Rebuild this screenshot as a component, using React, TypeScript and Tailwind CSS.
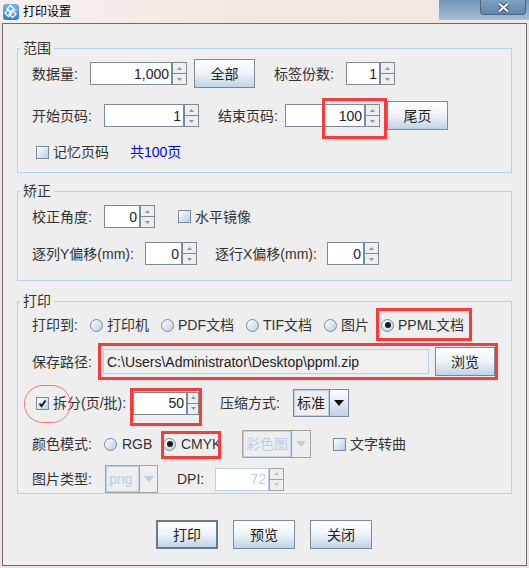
import React from "react"

type Kids = { children?: React.ReactNode }

function Tri({ up, color = "#8796a5" }: { up?: boolean; color?: string }) {
  return (
    <svg width="5" height="3" viewBox="0 0 5 3">
      <polygon points={up ? "2.5,0 5,3 0,3" : "0,0 5,0 2.5,3"} fill={color} />
    </svg>
  )
}

function Spinner({
  field,
  btn = "w-[15px]",
  value,
  disabled,
}: {
  field: string
  btn?: string
  value: string
  disabled?: boolean
}) {
  const bc = disabled ? "border-[#a3a3a3]" : "border-[#7a8a99]"
  return (
    <div className="flex h-[23px]">
      <div
        className={`${field} h-full bg-white border flex items-center justify-end pr-[2px] ${
          disabled ? "border-[#b8cfe5] text-[#b8cfe5]" : "border-[#7a8a99] text-[#222]"
        }`}
      >
        {value}
      </div>
      <div className={`${btn} h-full flex flex-col`}>
        <div className={`flex-1 border ${bc} bg-[#eeeeee] flex items-center justify-center`}>
          <Tri up color={disabled ? "#b8c4cf" : "#8796a5"} />
        </div>
        <div className={`flex-1 border border-t-0 ${bc} bg-[#eeeeee] flex items-center justify-center`}>
          <Tri color={disabled ? "#b8c4cf" : "#8796a5"} />
        </div>
      </div>
    </div>
  )
}

function Btn({ w, strong, children }: { w: string; strong?: boolean } & Kids) {
  return (
    <div
      className={`${w} h-[29px] flex items-center justify-center text-[#222] bg-linear-to-b from-white via-[#eef3f8] to-[#bfd2e6] ${
        strong ? "border-2 border-[#657b92]" : "border border-[#7a8a99]"
      }`}
    >
      {children}
    </div>
  )
}

function Check({ on }: { on?: boolean }) {
  return (
    <span className="w-[13px] h-[13px] shrink-0 border border-[#7a8a99] bg-linear-to-br from-white to-[#b8cfe5] flex items-center justify-center">
      {on && (
        <svg width="9" height="9" viewBox="0 0 9 9">
          <path d="M1.5 4.5 L3.5 7 L7.5 1.5" stroke="#1a1a1a" strokeWidth="2" fill="none" />
        </svg>
      )}
    </span>
  )
}

function Radio({ on }: { on?: boolean }) {
  return (
    <span className="w-[13px] h-[13px] shrink-0 rounded-full border border-[#7a8a99] bg-linear-to-br from-white to-[#b8cfe5] flex items-center justify-center">
      {on && <span className="w-[6px] h-[6px] rounded-full bg-[#1a1a1a]" />}
    </span>
  )
}

function Combo({
  field,
  arrow,
  text,
  disabled,
}: {
  field: string
  arrow: string
  text: string
  disabled?: boolean
}) {
  return (
    <div className={`flex h-[28px] border ${disabled ? "border-[#a3a3a3]" : "border-[#7a8a99]"}`}>
      <div
        className={`${field} h-full border border-[#b8cfe5] bg-[#eeeeee] flex items-center pl-[2px] ${
          disabled ? "text-[#b8cfe5]" : "text-[#222]"
        }`}
      >
        {text}
      </div>
      <div
        className={`${arrow} h-full flex items-center justify-center border-l ${
          disabled
            ? "border-[#a3a3a3] bg-[#eeeeee]"
            : "border-[#7a8a99] bg-linear-to-b from-white to-[#bfd2e6]"
        }`}
      >
        <svg width="10" height="6" viewBox="0 0 10 6">
          <polygon points="0,0 10,0 5,6" fill={disabled ? "#b8cfe5" : "#111"} />
        </svg>
      </div>
    </div>
  )
}

function Group({ title, className, children }: { title: string; className: string } & Kids) {
  return (
    <fieldset className={`ml-[14px] w-[495px] border border-[#b8cfe5] ${className}`}>
      <legend className="ml-[2px] px-[3px] leading-[16px] text-[#333]">{title}</legend>
      {children}
    </fieldset>
  )
}

function AppIcon() {
  return (
    <svg width="16" height="16" viewBox="0 0 16 16">
      <defs>
        <linearGradient id="ig" x1="0" y1="0" x2="0" y2="1">
          <stop offset="0" stopColor="#6fb6f2" />
          <stop offset="1" stopColor="#2e7fd6" />
        </linearGradient>
      </defs>
      <rect x="0" y="0" width="16" height="16" rx="3" fill="url(#ig)" />
      <g fill="none" stroke="#fff" strokeWidth="1.3">
        <rect x="5" y="2.5" width="5" height="5" transform="rotate(45 7.5 5)" />
        <rect x="3" y="6.5" width="5" height="5" transform="rotate(45 5.5 9)" />
        <rect x="7" y="7.5" width="5" height="5" transform="rotate(45 9.5 10)" />
      </g>
      <circle cx="12.5" cy="6" r="1.3" fill="#f4c542" />
    </svg>
  )
}

export default function App() {
  return (
    <div className="relative w-[529px] h-[568px] overflow-hidden bg-[#f2e2e1] font-['Liberation_Sans','Noto_Sans_CJK_SC',sans-serif] text-[14px] leading-[16px] text-[#333]">
      {/* title bar */}
      <div className="h-[23px] flex bg-linear-to-r from-[#f6f0ee] via-[#f1e8e1] to-[#efe9e4]">
        <div className="flex items-center pl-[3px] gap-[4px]">
          <AppIcon />
          <span className="text-[12px] text-black">打印设置</span>
        </div>
        <div className="flex-1" />
        <div className="w-[90px] h-[20px] bg-linear-to-b from-[#6f96b8] to-[#a9c0d3] flex justify-end pr-[3px]">
          <div className="w-[46px] h-[15px] rounded-b-[4px] border border-t-0 border-[#4a6682] bg-linear-to-b from-[#7fa2c2] to-[#5f86aa] flex items-center justify-center">
            <svg width="13" height="11" viewBox="0 0 13 11">
              <path d="M2 1.5 L11 9.5 M11 1.5 L2 9.5" stroke="#34495e" strokeWidth="4" />
              <path d="M2 1.5 L11 9.5 M11 1.5 L2 9.5" stroke="#fff" strokeWidth="2.2" />
            </svg>
          </div>
        </div>
      </div>

      {/* window */}
      <div className="ml-[2px] w-[525px] h-[543px] border border-[#6e6e6e] bg-[#eeeeee] flex flex-col">
        <Group title="范围" className="mt-[16px] pb-[10px]">
          <div className="mt-[3px] h-[29px] flex items-center pl-[14px]">
            <span className="w-[58px]">数据量:</span>
            <Spinner field="w-[82px]" value="1,000" />
            <div className="ml-[7px]">
              <Btn w="w-[61px]">全部</Btn>
            </div>
            <span className="ml-[19px] w-[72px]">标签份数:</span>
            <Spinner field="w-[34px]" value="1" />
          </div>
          <div className="mt-[13px] h-[29px] flex items-center pl-[14px]">
            <span className="w-[72px]">开始页码:</span>
            <Spinner field="w-[80px]" value="1" />
            <span className="ml-[19px] w-[67px]">结束页码:</span>
            <Spinner field="w-[80px]" value="100" />
            <div className="ml-[7px]">
              <Btn w="w-[61px]">尾页</Btn>
            </div>
          </div>
          <div className="mt-[12px] h-[20px] flex items-center pl-[18px]">
            <Check />
            <span className="ml-[4px] w-[77px]">记忆页码</span>
            <span className="text-[#0000ff]">共100页</span>
          </div>
        </Group>

        <Group title="矫正" className="mt-[10px] pb-[15px]">
          <div className="mt-[6px] h-[23px] flex items-center pl-[14px]">
            <span className="w-[72px]">校正角度:</span>
            <Spinner field="w-[36px]" value="0" />
            <span className="ml-[23px]">
              <Check />
            </span>
            <span className="ml-[4px]">水平镜像</span>
          </div>
          <div className="mt-[14px] h-[23px] flex items-center pl-[14px]">
            <span className="w-[113px]">逐列Y偏移(mm):</span>
            <Spinner field="w-[37px]" value="0" />
            <span className="ml-[18px] w-[112px]">逐行X偏移(mm):</span>
            <Spinner field="w-[37px]" value="0" />
          </div>
        </Group>

        <Group title="打印" className="mt-[12px]">
          <div className="mt-[5px] h-[22px] flex items-center pl-[14px]">
            <span className="w-[58px]">打印到:</span>
            <Radio />
            <span className="ml-[4px] w-[54px]">打印机</span>
            <Radio />
            <span className="ml-[4px] w-[68px]">PDF文档</span>
            <Radio />
            <span className="ml-[4px] w-[61px]">TIF文档</span>
            <Radio />
            <span className="ml-[4px] w-[40px]">图片</span>
            <Radio on />
            <span className="ml-[4px]">PPML文档</span>
          </div>
          <div className="mt-[11px] h-[29px] flex items-center pl-[14px]">
            <span className="w-[71px]">保存路径:</span>
            <div className="w-[326px] h-[25px] border border-[#b8cfe5] bg-[#efefef] flex items-center pl-[3px] text-[#222]">
              C:\Users\Administrator\Desktop\ppml.zip
            </div>
            <div className="ml-[6px]">
              <Btn w="w-[60px]">浏览</Btn>
            </div>
          </div>
          <div className="mt-[13px] h-[28px] flex items-center pl-[18px]">
            <Check on />
            <span className="ml-[4px] w-[80px]">拆分(页/批):</span>
            <Spinner field="w-[54px]" btn="w-[12px]" value="50" />
            <span className="ml-[21px] w-[73px]">压缩方式:</span>
            <Combo field="w-[35px]" arrow="w-[19px]" text="标准" />
          </div>
          <div className="mt-[13px] h-[28px] flex items-center pl-[14px]">
            <span className="w-[72px]">颜色模式:</span>
            <Radio />
            <span className="ml-[5px] w-[41px]">RGB</span>
            <Radio on />
            <span className="ml-[5px] w-[61px]">CMYK</span>
            <Combo field="w-[48px]" arrow="w-[19px]" text="彩色图" disabled />
            <span className="ml-[22px]">
              <Check />
            </span>
            <span className="ml-[4px]">文字转曲</span>
          </div>
          <div className="mt-[7px] h-[28px] flex items-center pl-[14px]">
            <span className="w-[73px]">图片类型:</span>
            <Combo field="w-[33px]" arrow="w-[18px]" text="png" disabled />
            <span className="ml-[19px] w-[38px]">DPI:</span>
            <Spinner field="w-[54px]" value="72" disabled />
          </div>
        </Group>

        <div className="mt-[26px] ml-[153px] flex gap-[15px]">
          <Btn w="w-[62px]" strong>
            打印
          </Btn>
          <Btn w="w-[62px]">预览</Btn>
          <Btn w="w-[62px]">关闭</Btn>
        </div>
      </div>

      {/* red annotation marks */}
      <div className="absolute left-[322px] top-[98px] w-[65px] h-[41px] border-[3px] border-[#ff3838]" />
      <div className="absolute left-[376px] top-[308px] w-[96px] h-[33px] border-[3px] border-[#ff3838]" />
      <div className="absolute left-[98px] top-[343px] w-[400px] h-[37px] border-[3px] border-[#ff3838]" />
      <div className="absolute left-[130px] top-[388px] w-[72px] h-[38px] border-[3px] border-[#ff3838]" />
      <div className="absolute left-[161px] top-[431px] w-[60px] h-[28px] border-[3px] border-[#ff3838]" />
      <div className="absolute left-[24px] top-[385px] w-[47px] h-[38px] rounded-full border border-[#ec7a7a]" />
    </div>
  )
}
